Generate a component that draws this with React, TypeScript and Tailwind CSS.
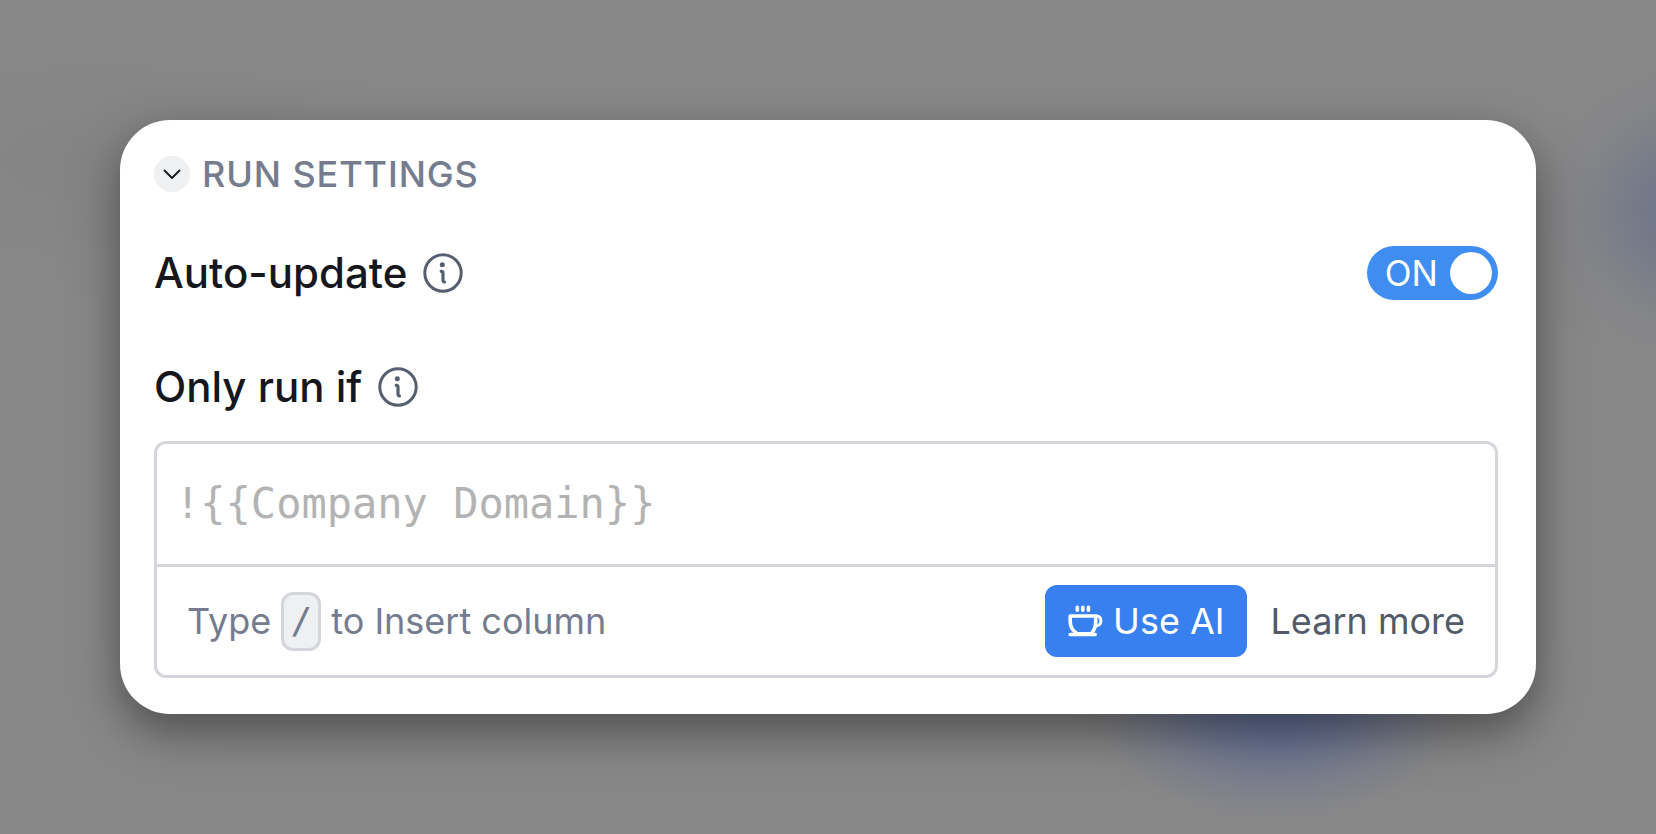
import React, { useState } from "react";

const InfoIcon: React.FC = () => (
  <svg className="size-10 shrink-0 text-[#565f70]" viewBox="0 0 40 40" fill="none" aria-hidden="true">
    <circle cx="20" cy="20" r="18.2" stroke="currentColor" strokeWidth="3" />
    <circle cx="19.3" cy="11.8" r="2.5" fill="currentColor" />
    <path
      d="M18.2 18.4q1.800-.2 1.800 1.800v6.600q0 2 1.500 2.200"
      stroke="currentColor"
      strokeWidth="3.200"
      strokeLinecap="round"
      strokeLinejoin="round"
    />
  </svg>
);

const CupIcon: React.FC = () => (
  <svg className="h-8 w-9 shrink-0" viewBox="0 0 36 32" fill="none" stroke="currentColor" aria-hidden="true">
    <path d="M10.300 2.200v3M15.800 2.200v3M21.400 2.200v3" strokeWidth="3.600" strokeLinecap="round" />
    <path
      d="M3.200 11h25.500v5.600c0 5-1.800 9.400-4.500 12.200H10.200c-4.400-2.800-7-7.200-7-12.200z"
      strokeWidth="3.600"
      strokeLinejoin="round"
    />
    <path d="M28.500 11h1.300a4 4 0 0 1 4 4v1.200c0 2.800-2.600 4.700-6.200 5" strokeWidth="3" />
    <path d="M3.200 29.500h25" strokeWidth="3.600" strokeLinecap="round" />
  </svg>
);

interface FieldLabelProps {
  id: string;
  htmlFor: string;
  text: string;
}

const FieldLabel: React.FC<FieldLabelProps> = ({ id, htmlFor, text }) => (
  <div className="flex items-center gap-4">
    <label id={id} htmlFor={htmlFor} className="text-[42px] leading-[54px] font-medium text-[#15171c]">
      {text}
    </label>
    <InfoIcon />
  </div>
);

const App: React.FC = () => {
  const [open, setOpen] = useState(true);
  const [autoUpdate, setAutoUpdate] = useState(true);
  const [condition, setCondition] = useState("");

  return (
    <main className="flex min-h-screen items-center bg-[#888888] bg-[radial-gradient(ellipse_215px_150px_at_1276px_690px,#5b6994_0px,#626e94cc_35%,#6e759366_65%,#7c7f8a22_85%,transparent_100%),radial-gradient(circle_at_1690px_212px,#68718a_0px,#6e758899_65px,#7c7f8744_115px,transparent_170px),radial-gradient(ellipse_at_100px_160px,#8080807f_0px,transparent_320px)] p-[120px] font-['Inter',sans-serif]">
      <section className="w-full rounded-[50px] bg-white pt-8 pr-[38px] pb-9 pl-[34px] shadow-[0_20px_60px_rgba(0,0,0,0.25),0_16px_32px_rgba(0,0,0,0.2)]">
        <h2>
          <button
            type="button"
            aria-expanded={open}
            onClick={() => setOpen(!open)}
            className="flex items-center gap-3 text-4xl leading-[44px] font-medium tracking-wide text-[#747c8e]"
          >
            <span className="flex size-9 items-center justify-center rounded-full bg-[#eff0f2]">
              <svg className="h-3 w-5 text-[#15171c]" viewBox="0 0 20 12" fill="none" aria-hidden="true">
                <path
                  d="M2.500 2.500l7.500 7.500 7.500-7.500"
                  stroke="currentColor"
                  strokeWidth="1.800"
                  strokeLinecap="round"
                  strokeLinejoin="round"
                />
              </svg>
            </span>
            RUN SETTINGS
          </button>
        </h2>

        {open && (
          <>
            <div className="mt-[50px] flex items-center justify-between">
              <FieldLabel id="auto-update-label" htmlFor="auto-update" text="Auto-update" />
              <button
                id="auto-update"
                type="button"
                role="switch"
                aria-checked={autoUpdate}
                aria-labelledby="auto-update-label"
                onClick={() => setAutoUpdate(!autoUpdate)}
                className="flex h-[54px] items-center gap-3 rounded-full bg-[#3f8df0] pr-1.5 pl-[18px] text-[35px] leading-[54px] text-white"
              >
                {autoUpdate ? "ON" : "OFF"}
                <span className="size-[42px] rounded-full bg-white" />
              </button>
            </div>

            <div className="mt-[60px]">
              <FieldLabel id="only-run-if-label" htmlFor="only-run-if" text="Only run if" />
            </div>

            <div className="mt-[27px] rounded-xl border-3 border-[#d5d6dc]">
              <input
                id="only-run-if"
                type="text"
                value={condition}
                onChange={(e) => setCondition(e.target.value)}
                placeholder="!{{Company Domain}}"
                className="block h-[120px] w-full px-[18px] pb-0.5 font-['DejaVu_Sans_Mono',monospace] text-[42px] text-[#15171c] outline-none placeholder:text-[#b3b3b3]"
              />
              <div className="flex h-[111px] items-center justify-between border-t-3 border-[#d5d6dc] px-[30px] text-4xl">
                <p className="flex items-center gap-2.5 text-[#747c8e]">
                  Type
                  <kbd className="flex h-[59px] w-10 items-center justify-center rounded-xl border-3 border-[#d5d6dc] bg-[#eff0f2] font-['DejaVu_Sans_Mono',monospace] text-4xl">
                    /
                  </kbd>
                  to Insert column
                </p>
                <div className="flex items-center gap-6">
                  <button
                    type="button"
                    className="flex h-[72px] items-center gap-2.5 rounded-xl bg-[#3880ef] px-[22px] text-white"
                  >
                    <CupIcon />
                    Use AI
                  </button>
                  <a href="#learn-more" className="text-[#535a69]">
                    Learn more
                  </a>
                </div>
              </div>
            </div>
          </>
        )}
      </section>
    </main>
  );
};

export default App;
